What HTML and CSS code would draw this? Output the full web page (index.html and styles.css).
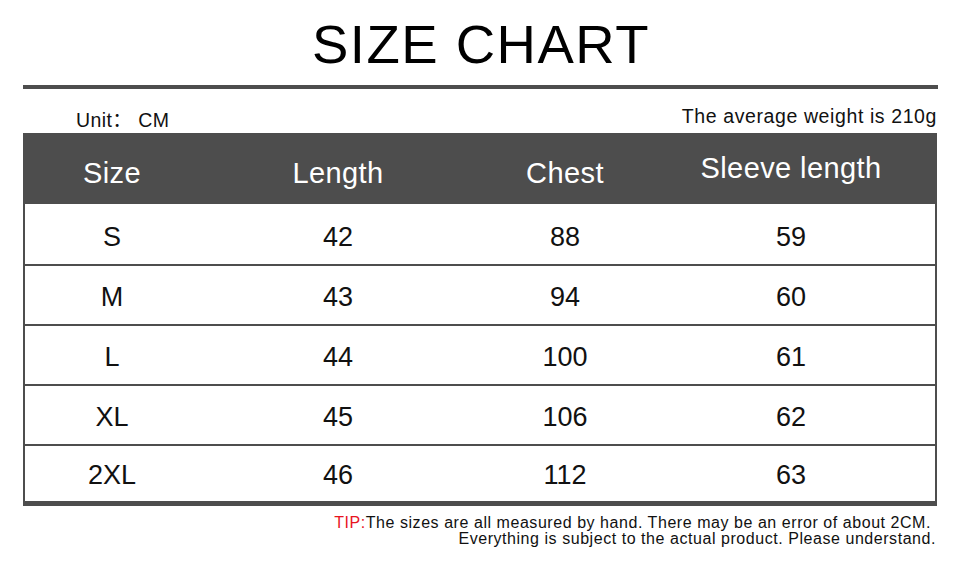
FILE: index.html
```html
<!DOCTYPE html>
<html lang="en">
<head>
<meta charset="utf-8">
<title>Size Chart</title>
<link rel="stylesheet" href="styles.css">
</head>
<body>
<div class="page">
  <header class="head">
    <h1 class="title">SIZE CHART</h1>
  </header>
  <div class="rule"></div>
  <div class="info">
    <span class="unit">Unit：<span class="cm">CM</span></span>
    <span class="weight">The average weight is 210g</span>
  </div>
  <div class="chart">
    <div class="row row-head">
      <div class="cell">Size</div>
      <div class="cell">Length</div>
      <div class="cell">Chest</div>
      <div class="cell cell-up">Sleeve length</div>
    </div>
    <div class="row row-first">
      <div class="cell">S</div><div class="cell">42</div><div class="cell">88</div><div class="cell">59</div>
    </div>
    <div class="row">
      <div class="cell">M</div><div class="cell">43</div><div class="cell">94</div><div class="cell">60</div>
    </div>
    <div class="row">
      <div class="cell">L</div><div class="cell">44</div><div class="cell">100</div><div class="cell">61</div>
    </div>
    <div class="row">
      <div class="cell">XL</div><div class="cell">45</div><div class="cell">106</div><div class="cell">62</div>
    </div>
    <div class="row row-last">
      <div class="cell">2XL</div><div class="cell">46</div><div class="cell">112</div><div class="cell">63</div>
    </div>
  </div>
  <div class="tip">
    <p class="tip-line tip-line-1"><span class="tip-label">TIP:</span>The sizes are all measured by hand. There may be an error of about 2CM.</p>
    <p class="tip-line">Everything is subject to the actual product. Please understand.</p>
  </div>
</div>
</body>
</html>
```
FILE: styles.css
```css
* { box-sizing: border-box; }
html, body {
  margin: 0;
  padding: 0;
  background: #ffffff;
}
body {
  font-family: "Liberation Sans", Arial, "Noto Sans CJK SC", sans-serif;
  color: #111111;
  width: 960px;
  height: 574px;
  overflow: hidden;
}
.page {
  display: flex;
  flex-direction: column;
}
.head {
  height: 85px;
  padding-top: 18px;
  display: flex;
  justify-content: center;
}
.title {
  margin: 0 0 0 2px;
  font-weight: normal;
  font-size: 54.5px;
  line-height: 54.5px;
  letter-spacing: 1.5px;
  color: #000;
}
.rule {
  height: 4px;
  background: #4d4d4d;
  margin: 0 22px 0 23px;
}
.info {
  height: 44px;
  display: flex;
  justify-content: space-between;
  align-items: flex-start;
  padding: 0 23px 0 76px;
}
.unit {
  font-size: 19.5px;
  line-height: 20px;
  margin-top: 21px;
  letter-spacing: 0.4px;
  font-family: "Liberation Sans", "Noto Sans CJK SC", sans-serif;
}
.cm { margin-left: 6px; }
.weight {
  font-size: 19.5px;
  line-height: 20px;
  margin-top: 17px;
  letter-spacing: 0.6px;
}
.chart {
  margin-left: 23px;
  width: 914px;
  border-left: 2px solid #4d4d4d;
  border-right: 2px solid #4d4d4d;
  border-bottom: 5px solid #4d4d4d;
}
.row {
  display: grid;
  grid-template-columns: 174px 278px 176px 276px 1fr;
  height: 60px;
  border-top: 2px solid #4d4d4d;
}
.row-head {
  height: 71px;
  border-top: 0;
  background: #4d4d4d;
  color: #ffffff;
}
.row-first { border-top: 0; height: 60px; }
.row-last { height: 57px; }
.cell {
  display: flex;
  align-items: center;
  justify-content: center;
  font-size: 27px;
  line-height: 27px;
  padding-top: 4px;
  white-space: nowrap;
}
.row-first .cell { padding-top: 6px; }
.row-head .cell {
  font-size: 29px;
  line-height: 29px;
  letter-spacing: 0.4px;
  padding-top: 10px;
}
.row-head .cell-up { padding-top: 0; }
.tip {
  margin-top: 9px;
  padding-right: 24px;
  text-align: right;
}
.tip-line {
  margin: 0;
  font-size: 16px;
  line-height: 16px;
  letter-spacing: 0.55px;
  color: #111;
}
.tip-line-1 { padding-right: 5px; }
.tip-label { color: #e8141e; }
```
